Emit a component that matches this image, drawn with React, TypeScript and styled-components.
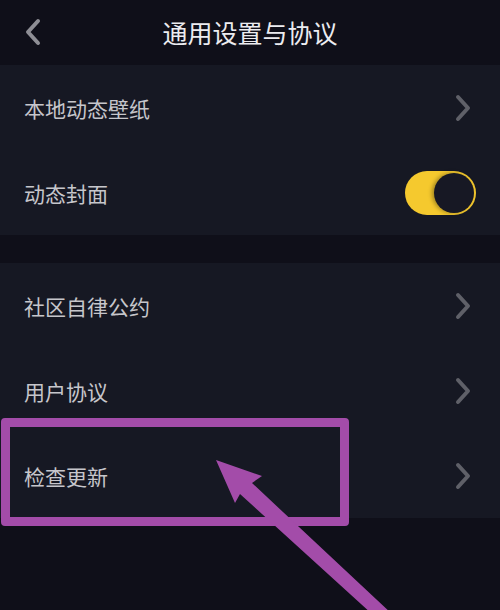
import { useState } from "react";
import styled, { createGlobalStyle } from "styled-components";

const GlobalStyle = createGlobalStyle`
    html, body {
        margin: 0;
        padding: 0;
        background: #0f0f19;
    }
    body {
        font-family: "Noto Sans CJK SC", "Noto Sans", sans-serif;
    }
`;

interface Item {
    label: string;
    type: "link" | "switch";
}

const groups: Item[][] = [
    [
        { label: "本地动态壁纸", type: "link" },
        { label: "动态封面", type: "switch" },
    ],
    [
        { label: "社区自律公约", type: "link" },
        { label: "用户协议", type: "link" },
        { label: "检查更新", type: "link" },
    ],
];

const Chevron = ({ dir, color }: { dir: "left" | "right"; color: string }) => (
    <svg width="18" height="28" viewBox="0 0 18 28" fill="none">
        <path
            d={dir === "right" ? "M4 3 L14 14 L4 25" : "M14 3 L4 14 L14 25"}
            stroke={color}
            strokeWidth="4"
            strokeLinecap="round"
            strokeLinejoin="round"
        />
    </svg>
);

const App = () => {
    const [cover, setCover] = useState(true);

    return (
        <>
            <GlobalStyle />
            <PageStyle>
                <HeaderStyle>
                    <BackButton>
                        <Chevron dir="left" color="#8e8e95" />
                    </BackButton>
                    <TitleStyle>通用设置与协议</TitleStyle>
                </HeaderStyle>
                {groups.map((group, gi) => (
                    <GroupStyle key={gi}>
                        {group.map((item) => (
                            <RowStyle key={item.label}>
                                <LabelStyle>{item.label}</LabelStyle>
                                {item.type === "link" ? (
                                    <Chevron dir="right" color="#5f6068" />
                                ) : (
                                    <SwitchStyle $on={cover} onClick={() => setCover(!cover)}>
                                        <span />
                                    </SwitchStyle>
                                )}
                            </RowStyle>
                        ))}
                    </GroupStyle>
                ))}
                <HighlightBox />
                <ArrowStyle width="500" height="610" viewBox="0 0 500 610">
                    <polygon
                        points="216,460 262,476 252,483 392,614 372,614 240,494 235,503"
                        fill="#a34ca9"
                    />
                </ArrowStyle>
            </PageStyle>
        </>
    );
};

const PageStyle = styled.div`
    position: relative;
    width: 500px;
    min-height: 610px;
    background: #0f0f19;
    overflow: hidden;
`;

const HeaderStyle = styled.div`
    height: 65px;
    display: flex;
    align-items: center;
    justify-content: center;
    position: relative;
    padding-bottom: 2px;
    box-sizing: border-box;
`;

const BackButton = styled.div`
    position: absolute;
    left: 24px;
    top: 18px;
    display: flex;
`;

const TitleStyle = styled.h1`
    margin: 0;
    font-size: 25px;
    font-weight: 400;
    color: #ececf0;
    letter-spacing: 0;
`;

const GroupStyle = styled.div`
    background: #161823;
    & + & {
        margin-top: 28px;
    }
`;

const RowStyle = styled.div`
    height: 85px;
    display: flex;
    align-items: center;
    justify-content: space-between;
    padding: 0 28px 0 24px;
`;

const LabelStyle = styled.span`
    font-size: 21px;
    color: #c6c6cb;
`;

const SwitchStyle = styled.div<{ $on: boolean }>`
    width: 71px;
    height: 44px;
    border-radius: 22px;
    background: ${({ $on }) => ($on ? "#f5c92e" : "#3a3b45")};
    position: relative;
    margin-right: -4px;
    cursor: pointer;

    span {
        position: absolute;
        top: 2px;
        left: ${({ $on }) => ($on ? "29px" : "2px")};
        width: 40px;
        height: 40px;
        border-radius: 50%;
        background: #171824;
        box-shadow: -2px 0 4px rgba(0, 0, 0, 0.35);
    }
`;

const HighlightBox = styled.div`
    position: absolute;
    left: 1px;
    top: 418px;
    width: 348px;
    height: 108px;
    box-sizing: border-box;
    border: 9px solid #a34ca9;
    border-radius: 4px;
    pointer-events: none;
`;

const ArrowStyle = styled.svg`
    position: absolute;
    left: 0;
    top: 0;
    pointer-events: none;
`;

export default App;
